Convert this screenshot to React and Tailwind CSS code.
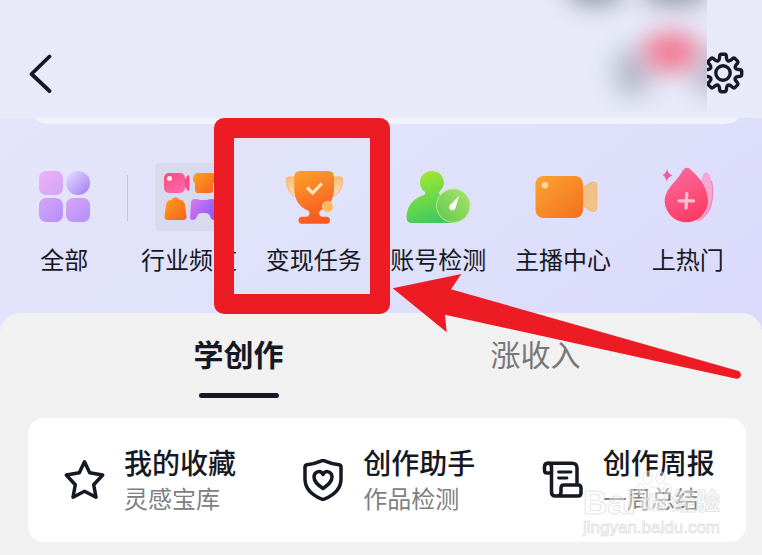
import { useState } from 'react'

const INK = '#161823'

// Outline of an eight-toothed cog around 0,0
const gearPath = () => {
    const pt = (r, deg) => {
        const a = (deg * Math.PI) / 180
        return `${(r * Math.cos(a)).toFixed(2)} ${(r * Math.sin(a)).toFixed(2)}`
    }
    let d = ''
    for (let i = 0; i < 8; i++) {
        const a = i * 45
        d += `${i === 0 ? 'M' : 'L'}${pt(15.5, a - 13)}`
        d += `Q${pt(18.8, a - 11)} ${pt(18.8, a - 6)}L${pt(18.8, a + 6)}`
        d += `Q${pt(18.8, a + 11)} ${pt(15.5, a + 13)}`
        d += `Q${pt(11, a + 22.5)} ${pt(15.5, a + 32)}`
    }
    return d + 'Z'
}

function AllIcon() {
    return (
        <svg viewBox="0 0 68 68" className="size-[68px]" aria-hidden="true">
            <defs>
                <linearGradient id="all-a" x1="0" y1="0" x2="1" y2="1">
                    <stop offset="0" stopColor="#eeb0f6" />
                    <stop offset="1" stopColor="#cfa6f6" />
                </linearGradient>
                <linearGradient id="all-b" x1="0" y1="0" x2="1" y2="1">
                    <stop offset="0.1" stopColor="#e2d6fb" />
                    <stop offset="1" stopColor="#a277f5" />
                </linearGradient>
                <linearGradient id="all-c" x1="0" y1="0" x2="1" y2="1">
                    <stop offset="0" stopColor="#d6a6f5" />
                    <stop offset="1" stopColor="#b48ffa" />
                </linearGradient>
            </defs>
            <rect x="9" y="8" width="24" height="24" rx="7" fill="url(#all-a)" />
            <circle cx="48" cy="20" r="12" fill="url(#all-b)" />
            <rect x="9" y="35" width="24" height="24" rx="7" fill="url(#all-c)" />
            <rect x="36" y="35" width="24" height="24" rx="7" fill="url(#all-c)" />
        </svg>
    )
}

function ChannelIcon() {
    return (
        <svg viewBox="0 0 68 68" className="size-[68px] rounded bg-[#d9daee]" aria-hidden="true">
            <defs>
                <linearGradient id="ch-pink" x1="0" y1="0" x2="0.6" y2="1">
                    <stop offset="0" stopColor="#fb4c75" />
                    <stop offset="1" stopColor="#fb66b0" />
                </linearGradient>
                <linearGradient id="ch-orange" x1="0" y1="0" x2="1" y2="1">
                    <stop offset="0" stopColor="#fda21f" />
                    <stop offset="1" stopColor="#f9601f" />
                </linearGradient>
                <linearGradient id="ch-violet" x1="0" y1="0" x2="1" y2="0.6">
                    <stop offset="0" stopColor="#dd79ea" />
                    <stop offset="1" stopColor="#8c5cf9" />
                </linearGradient>
            </defs>
            <rect x="9" y="10" width="21" height="20" rx="5" fill="url(#ch-pink)" />
            <path d="M30 16.500l2.500-4q2-.8 2 1.500v12q0 2.500-2 1.500l-2.500-4z" fill="#fb4c80" />
            <circle cx="14.500" cy="15.500" r="2.500" fill="#fff" opacity=".9" />
            <path d="M42 10h15q4 1 4 4v4q0 2-3 2v7q0 3-3 3H43q-3 0-3-3v-7q-2-1-2-3 0-6 4-7z" fill="url(#ch-orange)" />
            <path d="M16 37Q20.500 31.500 25 37 29 37 30 42L31.500 53Q32 57 28 57H13Q9 57 9.500 53L11 42Q12 37 16 37z" fill="url(#ch-orange)" />
            <path d="M36 40q0-4 4-4 3 0 5 1h7q2-1 5-1 4 0 4 4l1 14q0 3-3 3t-4-4q-1-3-5-3h-3q-4 0-5 3-1 4-4 4t-3-3z" fill="url(#ch-violet)" />
        </svg>
    )
}

function TaskIcon() {
    return (
        <svg viewBox="0 0 68 68" className="size-[68px]" aria-hidden="true">
            <defs>
                <linearGradient id="cup" x1="0" y1="0" x2="0.3" y2="1">
                    <stop offset="0" stopColor="#fca22b" />
                    <stop offset="1" stopColor="#f95a20" />
                </linearGradient>
                <linearGradient id="cup-ear" x1="0" y1="0" x2="0" y2="1">
                    <stop offset="0" stopColor="#f8ba74" />
                    <stop offset="1" stopColor="#fbe2c4" />
                </linearGradient>
            </defs>
            <path d="M16 14H9q-3 0-2.700 3Q7 31 17 34zM52 14h8q3 0 2.700 3Q62 31 51 34z" fill="url(#cup-ear)" stroke="#f9b76a" />
            <path d="M20 8h28q6 0 6 6v12c0 12-7 19-13.500 21.500q-2 1-1.500 3 .5 3 3.500 3.200h4q3.500 0 3.500 3.500t-3.500 3.500H22q-3.500 0-3.500-3.500t3.500-3.500h4q3-.2 3.500-3.200.5-2-1.500-3C21 45 14.300 38 14.300 26V14q0-6 5.700-6z" fill="url(#cup)" />
            <path d="M27 24.500l5.700 5.500 9-9.500" fill="none" stroke="#ffe6bd" strokeWidth="3.200" />
            <circle cx="47.700" cy="43.700" r="5.300" fill="#fbb860" stroke="#fdd28d" />
        </svg>
    )
}

function AccountIcon() {
    return (
        <svg viewBox="0 0 68 68" className="size-[68px]" aria-hidden="true">
            <defs>
                <linearGradient id="man" x1="0.3" y1="0" x2="0.6" y2="1">
                    <stop offset="0" stopColor="#a4e82e" />
                    <stop offset="1" stopColor="#3cca60" />
                </linearGradient>
                <linearGradient id="dial" x1="1" y1="0" x2="0" y2="1">
                    <stop offset="0" stopColor="#aee36a" />
                    <stop offset="1" stopColor="#5cc84e" />
                </linearGradient>
            </defs>
            <path d="M28 8a11.500 11.500 0 0 1 8 20q-2 2-1 3 14 6 14 22v7H8q-5.500 0-5.500-6C3 42 10 35 20 32q2-1 1-3A11.500 11.500 0 0 1 28 8z" fill="url(#man)" />
            <circle cx="49.300" cy="42.700" r="16.700" fill="url(#dial)" stroke="#b9eb8d" />
            <path d="M55 33l-3.500 12a3.300 3.300 0 1 1-4.500-4z" fill="#fff" />
        </svg>
    )
}

function StreamerIcon() {
    return (
        <svg viewBox="0 0 68 68" className="size-[68px]" aria-hidden="true">
            <defs>
                <linearGradient id="cam" x1="0" y1="0" x2="1" y2="1">
                    <stop offset="0" stopColor="#fba430" />
                    <stop offset="1" stopColor="#f3701f" />
                </linearGradient>
                <linearGradient id="lens" x1="0" y1="0" x2="1" y2="1">
                    <stop offset="0" stopColor="#eebc83" />
                    <stop offset="1" stopColor="#f3c78a" />
                </linearGradient>
            </defs>
            <path d="M54 25l7-5q6-2.500 6.500 1.500v24q-.5 4.500-6.500 2l-7-5z" fill="url(#lens)" stroke="#eeb46f" />
            <rect x="6.500" y="13" width="47.500" height="42" rx="8" fill="url(#cam)" />
            <circle cx="16" cy="22.300" r="3.300" fill="#fdd9a0" />
        </svg>
    )
}

function HotIcon() {
    return (
        <svg viewBox="0 0 68 68" className="size-[68px]" aria-hidden="true">
            <defs>
                <linearGradient id="drop" x1="0.2" y1="0" x2="0.6" y2="1">
                    <stop offset="0" stopColor="#fb6ca0" />
                    <stop offset="1" stopColor="#fb3a62" />
                </linearGradient>
            </defs>
            <path d="M50 10q3-2 5 1c5 10 5 24 2 34q-4 10-14 14L38 30q8-8 12-20z" fill="#f5a9d2" />
            <path d="M57.500 18c3 14 1 31-12 39" fill="none" stroke="#ee7fb8" />
            <path d="M29 7q4-4.500 8 0C46 15 54 25 54 39a21.700 21.700 0 0 1-43.300 0C10.700 25 23 19 29 7z" fill="url(#drop)" />
            <path d="M32.800 30.500l-.8 14.500M25 37.800h14.500" stroke="#ffc0d4" strokeWidth="3.200" strokeLinecap="round" />
            <path d="M13 6q1 5 5.500 6.500Q14 14 12.500 18.500 11.500 13 8.500 12 12 11 13 6z" fill="#e55fa8" />
        </svg>
    )
}

function StarIcon() {
    return (
        <svg viewBox="0 0 40 40" className="mt-1 size-10 shrink-0 overflow-visible" fill="none" stroke={INK} strokeWidth="3.500" strokeLinejoin="round" aria-hidden="true">
            <path d="M20.500 1.800l5.200 11 13 2.200-9 9.700 2.300 12.500-11.500-6-11.500 6 2.300-12.500-9-9.700 13-2.200z" />
        </svg>
    )
}

function ShieldIcon() {
    return (
        <svg viewBox="0 0 40 40" className="mt-1 size-10 shrink-0 overflow-visible" fill="none" stroke={INK} strokeWidth="3.500" strokeLinejoin="round" aria-hidden="true">
            <path d="M18.500.8q1.500-.6 3 0 6 2.700 14.500 4 2 .4 2 2.200v12c0 10-7 16-16.500 20q-1.500.7-3 0C9 35 2 29 2 19V7q0-1.800 2-2.200 8.500-1.300 14.500-4z" />
            <path d="M20 28.500c-5-3.500-9-6.500-9-11.500 0-5.500 6.500-7.500 9-2.500 2.500-5 9-3 9 2.500 0 5-4 8-9 11.500z" />
        </svg>
    )
}

function ScrollIcon() {
    return (
        <svg viewBox="0 0 40 40" className="mt-1 size-10 shrink-0 overflow-visible" fill="none" stroke={INK} strokeWidth="3.500" strokeLinecap="round" strokeLinejoin="round" aria-hidden="true">
            <path d="M5 3.300h24q5 0 5 5V23" />
            <path d="M8.500 13H4q-2.500 0-2.500-2.500V7q0-3.700 3.500-3.700T8.500 7v25q0 4 4 4H35q3 0 3-3v-5q0-3-3-3H21q-3 0-3 3v4q0 4-4 4" />
            <path d="M15.500 12H28M15.500 18H24" strokeWidth="2.800" />
        </svg>
    )
}

const shortcuts = [
    { label: '全部', Icon: AllIcon },
    { label: '行业频道', Icon: ChannelIcon, divider: true },
    { label: '变现任务', Icon: TaskIcon },
    { label: '账号检测', Icon: AccountIcon },
    { label: '主播中心', Icon: StreamerIcon },
    { label: '上热门', Icon: HotIcon },
]

const tabs = ['学创作', '涨收入']

const tools = [
    { title: '我的收藏', sub: '灵感宝库', Icon: StarIcon },
    { title: '创作助手', sub: '作品检测', Icon: ShieldIcon },
    { title: '创作周报', sub: '一周总结', Icon: ScrollIcon },
]

function Header() {
    return (
        <header className="relative flex h-[118px] items-center justify-between bg-[#e8eaf9] pt-7 pr-[15px] pl-5">
            <button type="button" aria-label="返回" className="flex size-10 items-center justify-center">
                <svg viewBox="0 0 40 40" className="size-10" fill="none" stroke={INK} strokeWidth="3.800" strokeLinecap="round" strokeLinejoin="round">
                    <path d="M29.500 3.500L11.500 21l18 17" />
                </svg>
            </button>
            <button type="button" aria-label="设置" className="size-12">
                <svg viewBox="-24 -24 48 48" className="size-12" fill="none" stroke={INK} strokeWidth="3.400" strokeLinejoin="round">
                    <path d={gearPath()} />
                    <circle r="7.200" />
                </svg>
            </button>
            {/* smudged part of the status bar */}
            <div className="absolute top-0 right-[55px] h-28 w-44 overflow-hidden bg-[#e8eaf9]">
                <div className="absolute -top-7 left-9 h-8 w-14 rounded-full bg-[#8f92a0] blur-[12px]"></div>
                <div className="absolute -top-7 left-28 h-8 w-16 rounded-full bg-[#8f92a0] blur-[12px]"></div>
                <div className="absolute top-12 left-[84px] h-12 w-9 rounded-full bg-[#b2b6c5] blur-[13px]"></div>
                <div className="absolute top-12 -right-5 h-12 w-8 rounded-full bg-[#b2b6c5] blur-[13px]"></div>
                <div className="absolute top-8 left-28 h-10 w-14 rounded-full bg-[#f07f9a] blur-[11px]"></div>
            </div>
        </header>
    )
}

function Shortcuts() {
    return (
        <nav className="pb-[38px]">
            <div className="mr-6 ml-9 h-1.5 rounded-b-[16px_6px] bg-[#f1f3fb]"></div>
            <ul className="grid grid-cols-6 pt-[39px] pr-3 pl-0.5">
                {shortcuts.map(({ label, Icon, divider }) => (
                    <li key={label} className="relative">
                        {divider && <span className="absolute top-3 left-0 h-[46px] w-px bg-[#c3c4da]"></span>}
                        <button type="button" className="flex w-full flex-col items-center gap-3">
                            <Icon />
                            <span className="text-2xl leading-8 whitespace-nowrap">{label}</span>
                        </button>
                    </li>
                ))}
            </ul>
        </nav>
    )
}

function Watermark() {
    return (
        <div className="pointer-events-none absolute right-[26px] bottom-1 flex flex-col font-['Liberation_Sans','Noto_Sans_CJK_SC',sans-serif] whitespace-nowrap text-white/40 [-webkit-text-stroke:1px_#d8d8d8b0]" aria-hidden="true">
            <div className="flex items-center font-bold">
                <span className="text-[34px] leading-8">Bai</span>
                <span className="relative w-9">
                    <svg viewBox="0 0 40 48" className="absolute -top-4 left-0 h-11 w-9" fill="#fff" fillOpacity=".4" stroke="#d8d8d8b0">
                        <ellipse cx="5" cy="21" rx="4.500" ry="6" />
                        <ellipse cx="13" cy="8" rx="5" ry="7" />
                        <ellipse cx="27" cy="8" rx="5" ry="7" />
                        <ellipse cx="35" cy="21" rx="4.500" ry="6" />
                        <path d="M20 18c6 0 8 7 13 12s3 15-5 15c-4 0-5-1-8-1s-4 1-8 1c-8 0-10-10-5-15s7-12 13-12z" />
                    </svg>
                    <span className="relative block text-center text-xl leading-8">du</span>
                </span>
                <span className="text-2xl leading-8">经验</span>
            </div>
            <span className="text-[17px] leading-5">jingyan.baidu.com</span>
        </div>
    )
}

function App() {
    const [active, setActive] = useState(0)

    return (
        <div className="relative flex min-h-screen flex-col overflow-hidden bg-linear-to-br from-[#e6e5fa] via-[#dfe1fb] to-[#d8d4fb] font-['Noto_Sans_CJK_SC',sans-serif] text-[#161823]">
            <Header />
            <Shortcuts />

            <main className="flex-1 rounded-t-[20px] bg-[#f1f1f1] px-7 pt-5 pb-3">
                <div role="tablist" className="grid grid-cols-2 pr-[50px] pl-[62px]">
                    {tabs.map((tab, i) => (
                        <button
                            key={tab}
                            type="button"
                            role="tab"
                            aria-selected={active === i}
                            onClick={() => setActive(i)}
                            className={active === i ? 'flex flex-col items-center font-bold' : 'flex flex-col items-center text-[#777]'}
                        >
                            <span className="text-[30px] leading-10">{tab}</span>
                            {active === i && <span className="mt-5 h-[5px] w-20 rounded-full bg-[#161823]"></span>}
                        </button>
                    ))}
                </div>

                <div className="relative -mr-3 mt-5 grid grid-cols-3 rounded-2xl bg-white pt-6 pb-7">
                    {tools.map(({ title, sub, Icon }) => (
                        <button key={title} type="button" className="flex items-center gap-5 pl-9 text-left">
                            <Icon />
                            <span className="flex flex-col whitespace-nowrap">
                                <span className="text-[28px] leading-10 font-medium">{title}</span>
                                <span className="text-2xl leading-8 text-[#808080]">{sub}</span>
                            </span>
                        </button>
                    ))}
                    <Watermark />
                </div>
            </main>

            {/* red marker frame and arrow */}
            <div className="pointer-events-none absolute top-[118px] left-[214px] h-[196px] w-44 rounded-[10px] border-20 border-[#ed1c24]"></div>
            <svg viewBox="0 0 350 106" className="pointer-events-none absolute top-[273px] left-[392px] h-[106px] w-[350px]" aria-hidden="true">
                <path d="M.7 15.300L69.300 1 59 16.300 346.500 98q3 1.500 2.300 4.500-1 3.500-4.500 3.300L53 41.700l1.700 17.600z" fill="#ed1c24" />
            </svg>
        </div>
    )
}

export default App
